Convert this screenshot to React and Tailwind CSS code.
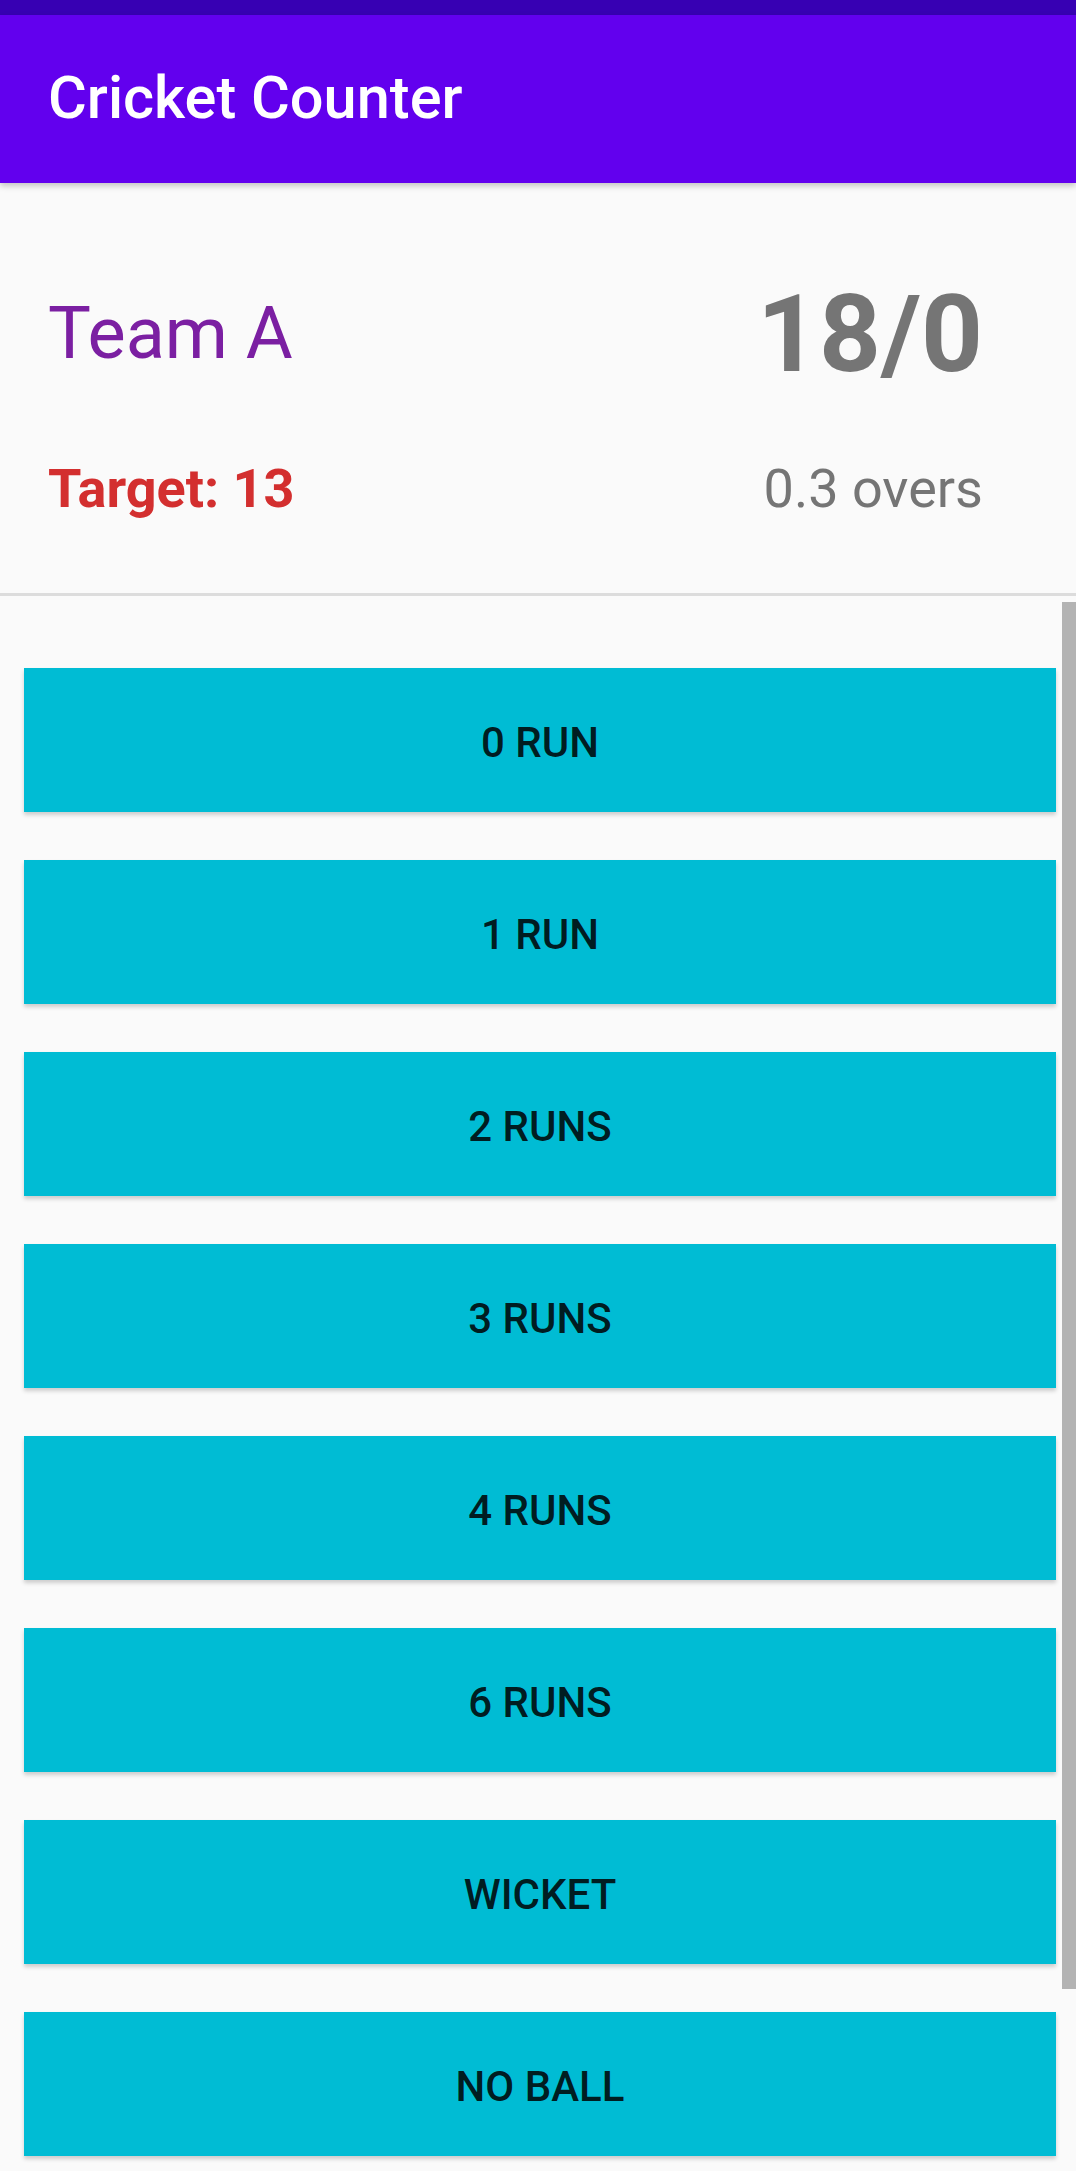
import React, { useState } from "react";

const buttons = ["0 Run", "1 Run", "2 Runs", "3 Runs", "4 Runs", "6 Runs", "Wicket", "No Ball"];

const App = () => {
  const [runs, setRuns] = useState(18);
  const [wickets, setWickets] = useState(0);
  const [balls, setBalls] = useState(3);

  const handlePress = (label) => {
    if (label === "Wicket") {
      setWickets((w) => w + 1);
      setBalls((b) => b + 1);
    } else if (label === "No Ball") {
      setRuns((r) => r + 1);
    } else {
      setRuns((r) => r + parseInt(label, 10));
      setBalls((b) => b + 1);
    }
  };

  return (
    <div
      className="relative flex h-[2171px] w-[1076px] flex-col overflow-hidden bg-[#fafafa]"
      style={{ fontFamily: "Roboto, 'Noto Sans', sans-serif" }}
    >
      <div className="h-[15px] bg-[#3700b3]" />
      <header className="relative z-10 flex h-[168px] items-center bg-[#6200ee] pl-[48px] shadow-[0_3px_6px_rgba(0,0,0,0.22)]">
        <h1 className="text-[59.5px] leading-none font-medium text-white">Cricket Counter</h1>
      </header>

      <section className="pt-[95px] pr-[93px] pb-[77px] pl-[48px]">
        <div className="flex h-[112px] items-center justify-between">
          <span className="text-[72px] leading-none text-[#7b1fa2]">Team A</span>
          <span className="text-[108px] leading-none font-bold text-[#757575]">
            {runs}/{wickets}
          </span>
        </div>
        <div className="mt-[72px] flex h-[54px] items-center justify-between">
          <span className="text-[54px] leading-none font-bold text-[#d32f2f]">Target: 13</span>
          <span className="text-[54px] leading-none text-[#757575]">
            {Math.floor(balls / 6)}.{balls % 6} overs
          </span>
        </div>
      </section>

      <div className="h-[3px] bg-[#dcdcdc]" />

      <div className="relative flex-1">
        <div className="flex flex-col gap-[48px] pt-[72px] pr-[20px] pl-[24px]">
          {buttons.map((label) => (
            <button
              key={label}
              onClick={() => handlePress(label)}
              className="flex h-[144px] items-center justify-center bg-[#00bcd4] pt-[6px] text-[42px] leading-none font-medium text-black/85 uppercase shadow-[0_3px_4px_rgba(0,0,0,0.18)]"
            >
              {label}
            </button>
          ))}
        </div>
        <div className="absolute top-[6px] right-0 h-[1387px] w-[14px] bg-[#b3b3b3]" />
      </div>
    </div>
  );
};

export default App;
